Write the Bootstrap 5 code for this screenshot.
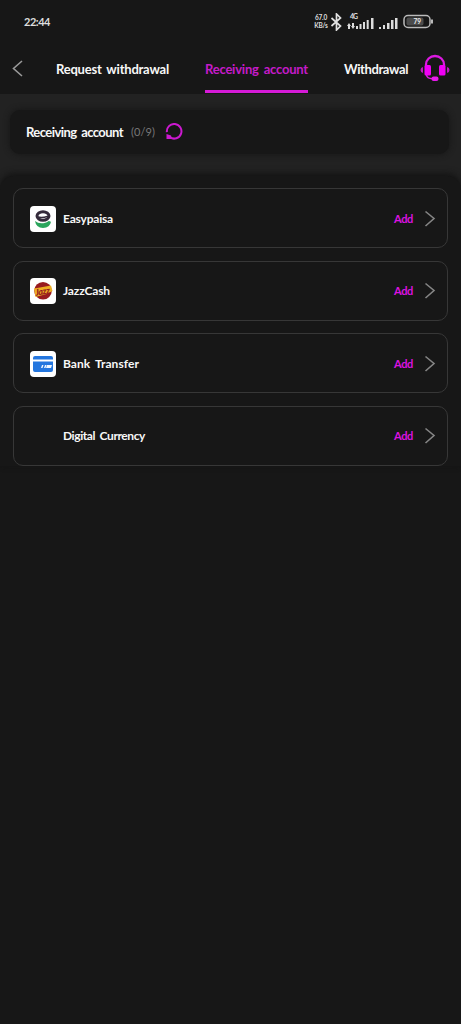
<!DOCTYPE html>
<html lang="en">
<head>
<meta charset="utf-8">
<meta name="viewport" content="width=device-width, initial-scale=1">
<title>Receiving account</title>
<link href="https://cdn.jsdelivr.net/npm/bootstrap@5.3.0/dist/css/bootstrap.min.css" rel="stylesheet">
<style>
  body { background: #171717; color: #f8f8f8; font-family: Lato, "Open Sans", sans-serif; font-size: 13px; line-height: 18px; font-weight: 700; min-height: 1024px; overflow: hidden; }
  svg { display: block; flex: none; }
  .pink { color: #dc12e0; font-size: 11px; }
  .status { height: 44px; padding: 0 27px 0 24px; }
  .clock { font-size: 11px; color: #dedede; }
  .speed { font-size: 6.5px; line-height: 8px; width: 14px; color: #ddd; letter-spacing: -.2px; white-space: nowrap; margin-right: 2px; }
  .tabs { height: 50px; padding-left: 12px; }
  .tab-item { height: 49px; line-height: 50px; white-space: nowrap; border-bottom: 3px solid transparent; margin-left: 36px; }
  .tab-first { width: 113px; margin-left: 33px; }
  .tab-last { width: 64px; }
  .tab-item.current { width: 103px; color: #c51bc9; border-color: #d51ad7; }
  .headset { margin: 10px 0 0 12px; }
  .band { background: #222; height: 83px; padding: 16px 12px 0 10px; }
  .summary { height: 44px; border-radius: 10px; background: #171717; box-shadow: 0 0 6px #151515; padding-left: 16px; }
  .count { color: #777; font-size: 11px; font-weight: 400; width: 24px; margin-left: 8px; }
  .reload { margin-left: 10px; }
  .sheet { background: #171717; border-radius: 14px 14px 0 0; box-shadow: 0 -2px 7px #121212; margin-top: -1px; padding: 12px 13px 0; gap: 12.5px; }
  .wrapper-dark { background: linear-gradient(#222 100px, #171717 100px); }
  .method { height: 60px; border: 1px solid #373737; border-radius: 10px; padding: 1px 11px 0 16px; font-size: 12px; }
  .logo-slot { width: 26px; height: 26px; margin-right: 7px; }
  .fit { display: inline-block; white-space: nowrap; word-spacing: 2px; }
</style>
</head>
<body>
<header>
  <div class="status d-flex align-items-center">
    <span class="clock fit" data-w="26">22:44</span>
    <div class="d-flex align-items-center ms-auto">
      <div class="speed text-center">67.0<br>KB/s</div>
      <svg width="13" height="18" viewBox="0 0 12 18" fill="none" stroke="#e1e1e1" stroke-width="1.700"><path d="M1 5l9 8-4 4V1l4 4-9 8"/></svg>
      <svg width="28" height="20" viewBox="0 0 28 20" class="ms-1" fill="#ddd"><text x="3" y="7" font-size="7" font-weight="700" textLength="8">4G</text><path d="M2 11l2 3H3v3H1v-3H0zM6 17l-2-3h1v-3h2v3h1zM9 14h2v3H9zM12.500 12h2v5h-2zM16 10h2v7h-2zM19.700 8h2v9h-2zM24 6h2.500v11H24z"/></svg>
      <svg width="20" height="20" viewBox="0 0 20 20" class="ms-1" fill="#ddd"><path d="M0 15h2v2H0zM4 13h2v4H4zM8 11h2.500v6H8zM12 8h2.500v9H12zM16 6h2.500v11H16z"/></svg>
      <svg width="31" height="16" viewBox="0 0 31 16" class="ms-1"><rect x="1" y="1.500" width="26" height="12" rx="4" fill="#171717" stroke="#bbb" stroke-width="1.500"/><rect x="3.500" y="3.500" width="17" height="8" rx="2" fill="#4c4c4c"/><path d="M29 5.500v4" stroke="#ccc" stroke-width="1.800"/><text x="10.500" y="10" font-size="6.500" fill="#eee">79</text></svg>
    </div>
  </div>
  <nav class="tabs d-flex">
    <svg width="11" height="50" viewBox="0 0 11 50" fill="none" stroke="#9a9a9a" stroke-width="1.600"><path d="M10 17L1.500 24.500 10 32"/></svg>
    <div class="tab-item tab-first"><span class="fit" data-w="113">Request withdrawal</span></div>
    <div class="tab-item current"><span class="fit" data-w="103">Receiving account</span></div>
    <div class="tab-item tab-last"><span class="fit" data-w="64">Withdrawal</span></div>
    <svg class="headset" width="30" height="28" viewBox="0 0 30 28"><path d="M6 12V10.500a9 8.500 0 0 1 18 0V12" fill="none" stroke="#dc19e1" stroke-width="2.300"/><rect x="4.500" y="11" width="6.500" height="10.500" rx="1.500" fill="#f000f5"/><rect x="19" y="11" width="6.500" height="10.500" rx="1.500" fill="#f000f5"/><path d="M0.500 16q0-2.500 2.500-3v6q-2.500-.5-2.500-3zM29.500 16q0-2.500-2.500-3v6q2.500-.5 2.500-3z" fill="#bd1bc1"/><path d="M6.500 21q.5 3.500 6 3.700" fill="none" stroke="#dc19e1" stroke-width="1.600"/><rect x="11.500" y="22.500" width="7" height="4.500" rx="2" fill="#e819ed"/></svg>
  </nav>
</header>
<main class="wrapper-dark">
  <section class="band">
    <div class="summary d-flex align-items-center">
      <span class="fit" data-w="97">Receiving account</span>
      <span class="count"><span class="fit" data-w="24">(0/9)</span></span>
      <svg class="reload" width="18" height="18" viewBox="0 0 18 18"><path d="M1.900 9.200A7.300 7.300 0 1 1 5 14.300" fill="none" stroke="#cc19d0" stroke-width="2"/><path d="M1.500 11v5h5.500l-1-3.500z" fill="#cc19d0"/></svg>
    </div>
  </section>
  <section class="sheet d-flex flex-column">
    <div class="method d-flex align-items-center">
      <div class="logo-slot"><svg width="26" height="26" viewBox="0 0 26 26"><rect width="26" height="26" rx="4" fill="#fff"/><ellipse cx="13" cy="10" rx="6" ry="4.200" fill="none" stroke="#352b3b" stroke-width="3"/><path d="M8 11q4 1.200 10-.8" fill="none" stroke="#352b3b" stroke-width="1.500"/><path d="M5 15q3.500 3 8.500 2.200 4-.6 5.300-2.200l2.200.8q-1 6-8 6.200-7-.2-8-7z" fill="#2ba55c"/></svg></div>
      <span class="fit" data-w="50">Easypaisa</span>
      <span class="fit pink ms-auto" data-w="19">Add</span>
      <svg class="ms-2" width="15" height="18" viewBox="0 0 15 18" fill="none" stroke="#858585" stroke-width="1.600"><path d="M4.500 1.500L13 8.500l-8.500 7.500"/></svg>
    </div>
    <div class="method d-flex align-items-center">
      <div class="logo-slot"><svg width="26" height="26" viewBox="0 0 26 26"><rect width="26" height="26" rx="4" fill="#fff"/><circle cx="13" cy="12.800" r="8.800" fill="#981b20"/><path d="M4 10.500l6-1 11-2 1.500 5.500-6 3-11 3z" fill="#edae24"/><text x="5" y="16.500" transform="rotate(-9 13 13)" font-size="9" font-style="italic" font-weight="900" fill="#981b20" textLength="15">Jazz</text></svg></div>
      <span class="fit" data-w="47">JazzCash</span>
      <span class="fit pink ms-auto" data-w="19">Add</span>
      <svg class="ms-2" width="15" height="18" viewBox="0 0 15 18" fill="none" stroke="#858585" stroke-width="1.600"><path d="M4.500 1.500L13 8.500l-8.500 7.500"/></svg>
    </div>
    <div class="method d-flex align-items-center">
      <div class="logo-slot"><svg width="26" height="26" viewBox="0 0 26 26"><rect width="26" height="26" rx="4" fill="#fff"/><path d="M3 8.500V7q0-2 2-2h16q2 0 2 2v1.500zM3 10.500h20V19q0 2-2 2H5q-2 0-2-2z" fill="#2376df"/><path d="M12 14h1.500l-1 3H11zM15 14h1.500l-1 3H14zM17 14h5l-1 3h-5z" fill="#eff6ff"/></svg></div>
      <span class="fit" data-w="76">Bank Transfer</span>
      <span class="fit pink ms-auto" data-w="19">Add</span>
      <svg class="ms-2" width="15" height="18" viewBox="0 0 15 18" fill="none" stroke="#858585" stroke-width="1.600"><path d="M4.500 1.500L13 8.500l-8.500 7.500"/></svg>
    </div>
    <div class="method d-flex align-items-center">
      <div class="logo-slot"></div>
      <span class="fit" data-w="82">Digital Currency</span>
      <span class="fit pink ms-auto" data-w="19">Add</span>
      <svg class="ms-2" width="15" height="18" viewBox="0 0 15 18" fill="none" stroke="#858585" stroke-width="1.600"><path d="M4.500 1.500L13 8.500l-8.500 7.500"/></svg>
    </div>
  </section>
</main>
<script src="https://cdn.jsdelivr.net/npm/bootstrap@5.3.0/dist/js/bootstrap.bundle.min.js"></script>
<script>
  // Track each label so that it fills its designed width.
  document.querySelectorAll('[data-w]').forEach(function (el) {
    var gap = (el.dataset.w - el.getBoundingClientRect().width) / el.textContent.length;
    el.style.letterSpacing = gap + 'px';
  });
</script>
</body>
</html>
